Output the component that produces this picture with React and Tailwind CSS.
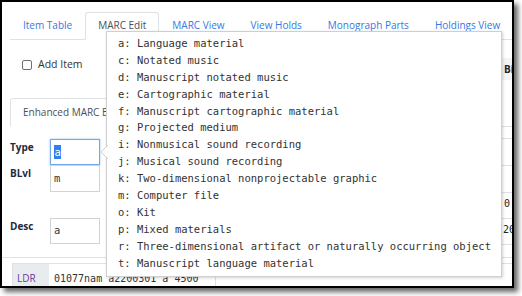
import React from 'react';

const tabs = ['Item Table', 'MARC Edit', 'MARC View', 'View Holds', 'Monograph Parts', 'Holdings View'];

const typeOptions = [
  'a: Language material',
  'c: Notated music',
  'd: Manuscript notated music',
  'e: Cartographic material',
  'f: Manuscript cartographic material',
  'g: Projected medium',
  'i: Nonmusical sound recording',
  'j: Musical sound recording',
  'k: Two-dimensional nonprojectable graphic',
  'm: Computer file',
  'o: Kit',
  'p: Mixed materials',
  'r: Three-dimensional artifact or naturally occurring object',
  't: Manuscript language material',
];

// first column of the fixed field grid (the rest sits under the popover)
const fixedFieldRows = [
  { h: 'h-[26px]', cell: { label: 'Type', value: 'a', focus: true } },
  { h: 'h-[27px]', cell: { label: 'BLvl', value: 'm' } },
  { h: 'h-[26px]', cell: null },
  { h: 'h-[26px]', cell: { label: 'Desc', value: 'a' } },
];

const FieldCell = ({ cell }) => {
  if (!cell) return <div />;
  return (
    <div className="flex h-full">
      <div className="w-[40px] pt-[2px] text-[10px] leading-[12px] font-bold text-[#1f2a3c]">{cell.label}</div>
      <div
        className={
          'w-[50px] h-full flex items-center pl-[3px] bg-white border font-[\'DejaVu_Sans_Mono\',monospace] text-[10.5px] text-[#333] ' +
          (cell.focus ? 'border-[#6fa8ee] shadow-[0_0_2px_rgba(80,150,235,0.6)]' : 'border-[#cfd4d9]')
        }
      >
        {cell.focus ? (
          <span className="bg-[#2f7ff0] text-white leading-[14px] px-[0.5px]">{cell.value}</span>
        ) : (
          <span>{cell.value}</span>
        )}
      </div>
    </div>
  );
};

const App = () => {
  return (
    <div className="w-[522px] h-[296px] bg-white font-['Open_Sans','Noto_Sans',sans-serif]">
      <div className="relative w-[514px] h-[288px] border-2 border-black bg-white overflow-hidden shadow-[4px_4px_5px_rgba(0,0,0,0.6)]">
        {/* Top tabs */}
        <nav className="ml-[8px] pt-[10px] flex border-b border-[#dee2e6] whitespace-nowrap">
          {tabs.map((t) => (
            <div
              key={t}
              className={
                'h-[28px] -mb-px px-[12px] pb-[2px] flex items-center border rounded-t-[3px] text-[10px] ' +
                (t === 'MARC Edit'
                  ? 'border-[#dee2e6] border-b-white bg-white text-[#495057]'
                  : 'border-transparent text-[#3578e5]')
              }
            >
              {t}
            </div>
          ))}
        </nav>

        {/* Body */}
        <div className="flex">
          <div className="w-[498px] flex-none pl-[8px]">
            <div className="mt-[15px] h-[20px] pl-[12px] flex items-center gap-[6px]">
              <span className="w-[10px] h-[10px] border border-[#707070] rounded-[2px] bg-white" />
              <span className="text-[10.5px] text-[#333]">Add Item</span>
            </div>

            <div className="mt-[23px] h-[29px] flex border-b border-[#dee2e6] whitespace-nowrap">
              <div className="h-[29px] -mb-px px-[12px] pb-[1px] flex items-center border border-[#dee2e6] border-b-white rounded-t-[3px] bg-white text-[10px] text-[#495057]">
                Enhanced MARC Editor
              </div>
            </div>

            <div className="mt-[12px] w-[492px]">
              {fixedFieldRows.map((row, i) => (
                <div key={i} className={row.h}>
                  <FieldCell cell={row.cell} />
                </div>
              ))}
            </div>
          </div>

          <div className="flex-1 min-w-0 pt-[18px] text-[10px] text-[#222] whitespace-nowrap">
            <div className="h-[22px] pl-[4px] flex items-center bg-[#f3f4f6] font-bold">Bib Source</div>
            <div className="h-[47px] border-b border-[#dee2e6]" />
            <div className="h-[12px] border-b border-[#dee2e6]" />
            <div className="h-[27px] border-b border-[#dee2e6]" />
            <div className="h-[27px] border-b border-[#dee2e6]" />
            <div className="h-[26px] pl-[4px] pb-[4px] flex items-center border-b border-[#dee2e6] font-['DejaVu_Sans_Mono',monospace]">0</div>
            <div className="h-[26px] pl-[3px] pb-[4px] flex items-center border-b border-[#dee2e6] font-['DejaVu_Sans_Mono',monospace]">2004</div>
          </div>
        </div>

        <div className="mt-[12px] border-t border-[#dee2e6]" />

        <div className="ml-[10px] mt-[5px] h-[30px] flex border-l border-t border-[#dee2e6]">
          <div className="w-[36px] pl-[4px] flex items-center bg-[#e9ecef] text-[10px] text-[#6b3a9c]">LDR</div>
          <div className="w-[167px] pl-[5px] flex items-center border-r border-[#dee2e6] font-['DejaVu_Sans_Mono',monospace] text-[10px] text-[#333] whitespace-nowrap">
            01077nam a2200301 a 4500
          </div>
        </div>

        {/* Type value popover */}
        <div className="absolute left-[104px] top-[29px] w-[396px] h-[246px] bg-white border border-[#cfcfcf] shadow-[1px_1px_3px_rgba(0,0,0,0.18)]">
          <svg className="absolute left-[-7px] top-[113px]" width="8" height="14" viewBox="0 0 8 14">
            <path d="M8 0 L1 7 L8 14" fill="white" stroke="#cfcfcf" strokeWidth="1" />
          </svg>
          <ul className="pl-[11px] pt-[3px] font-['DejaVu_Sans_Mono',monospace] text-[10.5px] text-[#333] whitespace-nowrap">
            {typeOptions.map((o) => (
              <li key={o} className="h-[16.9px] leading-[16.9px]">{o}</li>
            ))}
          </ul>
        </div>
      </div>
    </div>
  );
};

export default App;
